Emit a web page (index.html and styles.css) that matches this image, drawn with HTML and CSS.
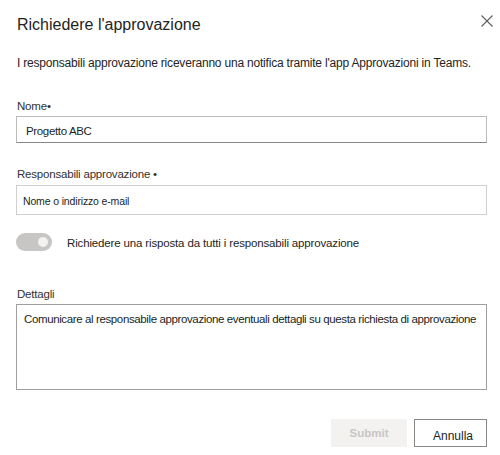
FILE: index.html
```html
<!DOCTYPE html>
<html lang="it">
<head>
<meta charset="utf-8">
<title>Richiedere l'approvazione</title>
<link rel="stylesheet" href="styles.css">
</head>
<body>
<div class="dialog">
  <header class="head">
    <h1 class="title">Richiedere l'approvazione</h1>
    <button class="close" type="button" aria-label="Chiudi">
      <svg width="12" height="12" viewBox="0 0 12 12"><path d="M0.5 0.5 L11.5 11.5 M11.5 0.5 L0.5 11.5" stroke="#605e5c" stroke-width="1.1" fill="none"/></svg>
    </button>
  </header>
  <p class="desc">I responsabili approvazione riceveranno una notifica tramite l'app Approvazioni in Teams.</p>

  <div class="label label-name">Nome<span class="req">•</span></div>
  <div class="input input-name">Progetto ABC</div>

  <div class="label label-resp">Responsabili approvazione <span class="req">•</span></div>
  <div class="input input-resp">Nome o indirizzo e-mail</div>

  <div class="toggle-row">
    <span class="toggle"></span>
    <span class="toggle-label">Richiedere una risposta da tutti i responsabili approvazione</span>
  </div>

  <div class="label label-det">Dettagli</div>
  <div class="textarea">Comunicare al responsabile approvazione eventuali dettagli su questa richiesta di approvazione</div>

  <div class="actions">
    <button class="btn btn-submit" type="button">Submit</button>
    <button class="btn btn-cancel" type="button">Annulla</button>
  </div>
</div>
</body>
</html>
```
FILE: styles.css
```css
html, body {
  margin: 0;
  padding: 0;
  background: #ffffff;
}
body {
  font-family: "Liberation Sans", Arial, sans-serif;
  color: #252423;
}
.dialog {
  width: 500px;
  height: 455px;
  box-sizing: border-box;
  padding: 15px 13px 0 16px;
  display: flex;
  flex-direction: column;
}
.head {
  display: flex;
  justify-content: space-between;
  align-items: flex-start;
  margin-right: -6px;
}
.title {
  margin: 0 0 0 1px;
  font-size: 16px;
  line-height: 20px;
  font-weight: normal;
  color: #252423;
}
.close {
  border: 0;
  padding: 0;
  margin: 0;
  background: none;
  width: 12px;
  height: 12px;
  display: block;
}
.close svg { display: block; }
.desc {
  margin: 20px 0 0 1px;
  font-size: 12px;
  line-height: 16px;
  letter-spacing: -0.2px;
  color: #252423;
}
.label {
  margin-left: 1px;
  font-size: 11.5px;
  line-height: 14px;
  letter-spacing: -0.2px;
  color: #323130;
}
.req { color: #323130; }
.label-name { margin-top: 28px; }
.label-resp { margin-top: 24px; }
.label-det { margin-top: 35px; }
.input {
  box-sizing: border-box;
  border: 1px solid #bebbb8;
  background: #fff;
  color: #201f1e;
}
.input-name {
  margin-top: 3px;
  height: 27px;
  padding: 7px 9px 0;
  font-size: 11.5px;
  line-height: 14px;
  letter-spacing: -0.35px;
  border-bottom-color: #8a8886;
}
.input-resp {
  margin-top: 4px;
  height: 30px;
  padding: 9px 6px 0;
  font-size: 10.5px;
  line-height: 13px;
  letter-spacing: -0.15px;
  border-color: #d2d0ce;
}
.toggle-row {
  margin-top: 18px;
  display: flex;
  align-items: flex-start;
  gap: 15px;
}
.toggle {
  position: relative;
  width: 36px;
  height: 18px;
  border-radius: 9px;
  background: #c8c6c4;
  flex: none;
}
.toggle::after {
  content: "";
  position: absolute;
  top: 4px;
  right: 4px;
  width: 10px;
  height: 10px;
  border-radius: 50%;
  background: #f3f2f1;
}
.toggle-label {
  font-size: 11.5px;
  line-height: 18px;
  letter-spacing: -0.15px;
  padding-top: 1px;
  color: #252423;
}
.textarea {
  margin-top: 3px;
  box-sizing: border-box;
  height: 86px;
  border: 1px solid #a19f9d;
  padding: 7px 7px 0;
  font-size: 11.5px;
  line-height: 14px;
  letter-spacing: -0.38px;
  color: #201f1e;
}
.actions {
  margin-top: 29px;
  display: flex;
  justify-content: flex-end;
  gap: 7px;
}
.btn {
  box-sizing: border-box;
  height: 28px;
  margin: 0;
  font-family: "Liberation Sans", Arial, sans-serif;
  display: flex;
  align-items: center;
  justify-content: center;
}
.btn-submit {
  width: 76px;
  border: 1px solid #f3f2f1;
  background: #f3f2f1;
  color: #c8c6c4;
  font-size: 11.5px;
  font-weight: bold;
}
.btn-cancel {
  width: 73px;
  border: 1px solid #8a8886;
  background: #fff;
  color: #201f1e;
  font-size: 12px;
  padding: 5px 0 0 5px;
}
```
